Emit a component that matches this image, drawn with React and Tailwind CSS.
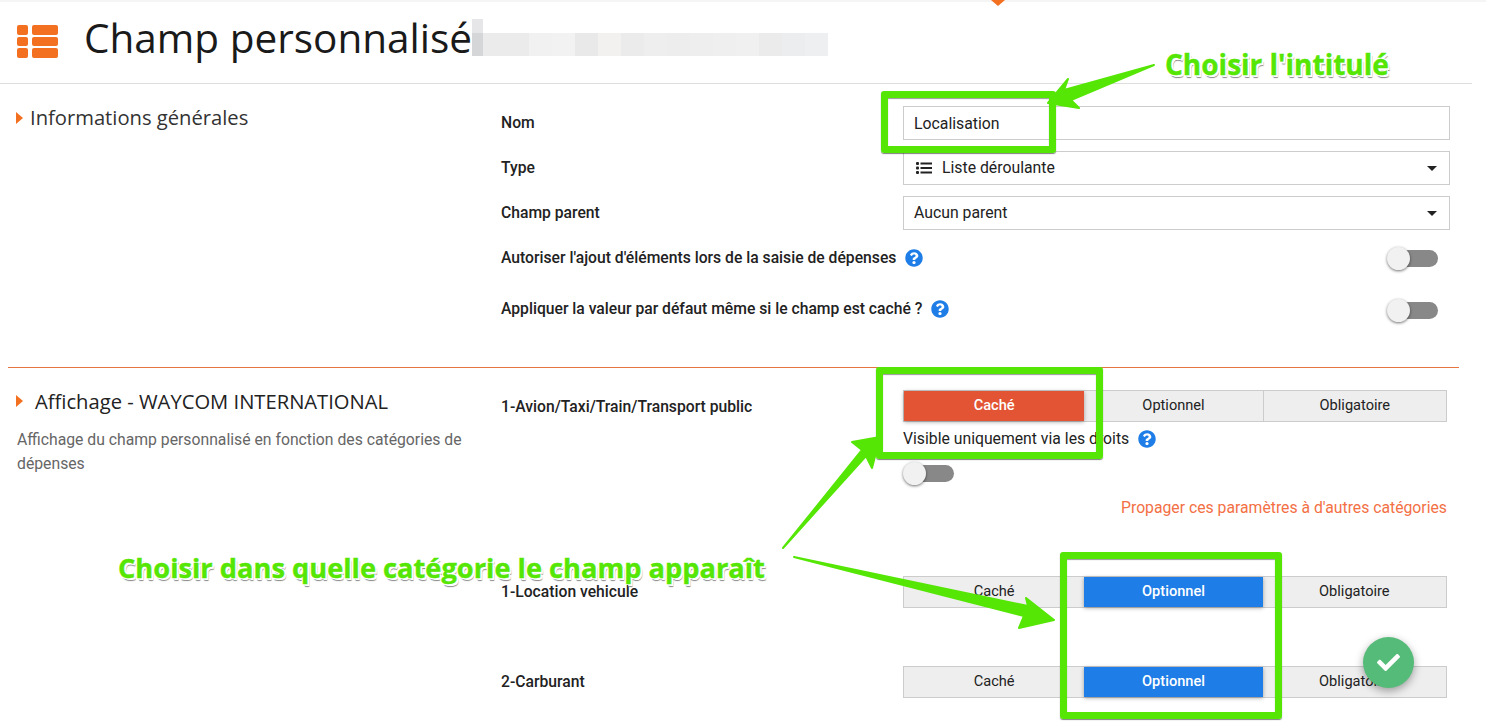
import { FaCheck, FaQuestionCircle } from "react-icons/fa";

const greens = "text-[#55e605]";
const annotationShadow =
  "[text-shadow:1px_0_0_#fff,-1px_0_0_#fff,0_1px_0_#fff,0_-1px_0_#fff,1px_1px_0_#fff,-1px_-1px_0_#fff,1px_-1px_0_#fff,-1px_1px_0_#fff,2px_2px_0_#fff,2px_3px_1px_#888]";

// Blurred-out part of the title
const blurCells = [
  "bg-[#ebebeb]",
  "bg-[#ebebeb]",
  "bg-[#f1f1f1]",
  "bg-[#f2f2f2]",
  "bg-[#e9e9e9]",
  "bg-[#f2f1ef]",
  "bg-[#ebebeb]",
  "bg-[#eeeeee]",
  "bg-[#ededed]",
  "bg-[#eeeeee]",
  "bg-[#efefef]",
  "bg-[#f0f0f0]",
  "bg-[#ebebeb]",
  "bg-[#ecedee]",
  "bg-[#eeeff0]",
];

function TableIcon() {
  return (
    <svg width="41" height="33" viewBox="0 0 41 33" className="shrink-0">
      <g fill="#f37021">
        <rect x="0" y="0" width="11" height="10" rx="2" />
        <rect x="15" y="0" width="26" height="10" rx="2" />
        <rect x="0" y="12" width="11" height="9" rx="2" />
        <rect x="15" y="12" width="26" height="9" rx="2" />
        <rect x="0" y="23" width="11" height="10" rx="2" />
        <rect x="15" y="23" width="26" height="10" rx="2" />
      </g>
    </svg>
  );
}

function Caret() {
  return <span className="block shrink-0 w-0 h-0 border-y-[6px] border-y-transparent border-l-[7px] border-l-[#f37021]" />;
}

function SelectCaret() {
  return <span className="block ml-auto w-0 h-0 border-x-[5px] border-x-transparent border-t-[5px] border-t-[#222]" />;
}

function Help() {
  return <FaQuestionCircle size={18} color="#1e7de6" className="shrink-0" />;
}

function Toggle({ className = "" }) {
  return (
    <div className={`relative w-[51px] h-[18px] ${className}`}>
      <div className="absolute right-0 top-0 w-[40px] h-[17px] rounded-full bg-[#888]" />
      <div className="absolute left-0 top-[-3px] w-[23px] h-[23px] rounded-full bg-[#f1f1f1] shadow-[0_1px_3px_rgba(0,0,0,0.55)]" />
    </div>
  );
}

function Row({ label, children }) {
  return (
    <div className="flex items-center h-[34px] mb-[11px]">
      <div className="w-[402px] text-[15.7px] font-medium text-[#222]">{label}</div>
      {children}
    </div>
  );
}

function Segments({ active }) {
  const cells = [
    { name: "Caché", w: "w-[181px]", on: "bg-[#e25433] text-white" },
    { name: "Optionnel", w: "w-[179px]", on: "bg-[#1e7de6] text-white" },
    { name: "Obligatoire", w: "w-[184px]", on: "bg-[#1e7de6] text-white" },
  ];
  return (
    <div className="flex w-[544px] h-[32px] bg-[#eeeeee] border border-[#cccccc] text-[14.6px] text-[#222]">
      {cells.map((c, i) => (
        <div
          key={c.name}
          className={`flex items-center justify-center ${c.w} ${
            active === c.name
              ? `${c.on} font-medium shadow-[0_1px_4px_rgba(0,0,0,0.35)]`
              : i === 2 && active === "Caché"
              ? "border-l border-[#cccccc]"
              : ""
          }`}
        >
          {c.name}
        </div>
      ))}
    </div>
  );
}

function GreenBox({ className }) {
  return (
    <div
      className={`absolute border-[7px] border-[#55e605] rounded-[3px] shadow-[0_1px_1px_rgba(0,0,0,0.5),inset_0_1px_1px_rgba(0,0,0,0.4)] ${className}`}
    />
  );
}

export default function App() {
  return (
    <div className="relative w-full h-[723px] overflow-hidden bg-white font-['Roboto',sans-serif] text-[#222]">
      {/* top bar shadow and notch */}
      <div className="absolute top-0 left-0 w-full h-[2px] bg-[#f5f5f5]" />
      <div className="absolute top-0 left-[991px] w-0 h-0 border-x-[7px] border-x-transparent border-t-[6px] border-t-[#f37021]" />

      {/* Header */}
      <div className="flex items-center w-[1472px] h-[84px] pl-[17px] border-b border-[#dddddd]">
        <TableIcon />
        <h1 className="ml-[26px] mt-[-7px] text-[40.5px] leading-none text-[#1a1a1a] font-['Open_Sans',sans-serif]">
          Champ personnalisé
        </h1>
        <div className="flex items-end h-[37px] mt-[-9px]">
          <div className="w-[11px] h-[37px] flex flex-col">
            <div className="h-[14px] bg-[#e6e6e8]" />
            <div className="h-[23px] bg-[#d5d6d8]" />
          </div>
          {blurCells.map((c, i) => (
            <div key={i} className={`w-[23px] h-[23px] ${c}`} />
          ))}
        </div>
      </div>

      {/* Informations generales */}
      <div className="flex h-[283px] pt-[21px]">
        <div className="w-[501px] pl-[16px] flex items-start gap-[7px]">
          <span className="mt-[7px]">
            <Caret />
          </span>
          <h2 className="text-[20.2px] leading-[24px] text-[#333] font-['Open_Sans',sans-serif]">Informations générales</h2>
        </div>
        <div className="w-[949px] pt-px">
          <Row label="Nom">
            <div className="flex items-center w-[547px] h-[34px] px-[10px] pt-[2px] border border-[#cccccc] text-[15.8px]">Localisation</div>
          </Row>
          <Row label="Type">
            <div className="flex items-center w-[547px] h-[34px] pl-[12px] pr-[12px] border border-[#cccccc] text-[15.8px]">
              <svg width="16" height="12" viewBox="0 0 16 12" className="mr-[10px]" fill="#222">
                <rect x="0" y="0" width="3" height="3" rx="1" />
                <rect x="0" y="4.5" width="3" height="3" rx="1" />
                <rect x="0" y="9" width="3" height="3" rx="1" />
                <rect x="4.5" y="0.5" width="11.5" height="2" />
                <rect x="4.5" y="5" width="11.5" height="2" />
                <rect x="4.5" y="9.5" width="11.5" height="2" />
              </svg>
              Liste déroulante
              <SelectCaret />
            </div>
          </Row>
          <Row label="Champ parent">
            <div className="flex items-center w-[547px] h-[34px] pl-[10px] pr-[12px] border border-[#cccccc] text-[15.8px]">
              Aucun parent
              <SelectCaret />
            </div>
          </Row>
          <div className="flex items-center justify-between w-[949px] h-[34px] mb-[17px] pr-[12px]">
            <div className="flex items-center gap-[9px] text-[15.7px] font-medium">
              Autoriser l'ajout d'éléments lors de la saisie de dépenses <Help />
            </div>
            <Toggle className="mt-[2px]" />
          </div>
          <div className="flex items-center justify-between w-[949px] h-[34px] pr-[12px]">
            <div className="flex items-center gap-[9px] text-[15.7px] font-medium">
              Appliquer la valeur par défaut même si le champ est caché ? <Help />
            </div>
            <Toggle className="mt-[4px]" />
          </div>
        </div>
      </div>

      <div className="ml-[8px] w-[1451px] h-px bg-[#e8743f]" />

      {/* Affichage */}
      <div className="flex pt-[22px]">
        <div className="w-[501px] pl-[16px]">
          <div className="flex items-center gap-[12px] mt-[-1px]">
            <Caret />
            <h2 className="text-[20.2px] leading-[24px] text-[#222] font-['Open_Sans',sans-serif]">
              Affichage - WAYCOM INTERNATIONAL
            </h2>
          </div>
          <p className="mt-[15px] ml-px w-[460px] text-[15.75px] leading-[24px] text-[#666]">
            Affichage du champ personnalisé en fonction des catégories de dépenses
          </p>
        </div>
        <div className="w-[946px]">
          <div className="flex items-start">
            <div className="w-[402px] h-[32px] pt-[2px] flex items-center text-[15.7px] font-medium">1-Avion/Taxi/Train/Transport public</div>
            <div>
              <Segments active="Caché" />
              <div className="flex items-center gap-[9px] mt-[6px] text-[15.75px] leading-[22px]">
                Visible uniquement via les droits <Help />
              </div>
              <Toggle className="mt-[15px]" />
              <div className="mt-[14px] text-right text-[15.75px] leading-[22px] text-[#f37045]">Propager ces paramètres à d'autres catégories</div>
            </div>
          </div>
          <div className="flex items-center mt-[57px]">
            <div className="w-[402px] text-[15.7px] font-medium">1-Location vehicule</div>
            <Segments active="Optionnel" />
          </div>
          <div className="flex items-center mt-[58px]">
            <div className="w-[402px] text-[15.7px] font-medium">2-Carburant</div>
            <Segments active="Optionnel" />
          </div>
        </div>
      </div>

      {/* Save button */}
      <div className="absolute left-[1363px] top-[637px] flex items-center justify-center w-[51px] h-[51px] rounded-full bg-[#55bb78] shadow-[0_3px_8px_rgba(0,0,0,0.35)]">
        <FaCheck size={23} color="#fff" />
      </div>

      {/* Annotations */}
      <GreenBox className="left-[881px] top-[91px] w-[175px] h-[62px]" />
      <GreenBox className="left-[876px] top-[367px] w-[227px] h-[92px]" />
      <GreenBox className="left-[1060px] top-[552px] w-[222px] h-[167px]" />
      <svg width="1486" height="723" className="absolute inset-0 pointer-events-none">
        <g fill="#55e605" stroke="#55e605" strokeWidth="2" strokeLinejoin="round">
          <polygon points="1154,65 1064,90 1068,79 1048,103 1079,108 1071,100" />
          <polygon points="783,548 862,450 852,442 880,437 872,468 866,456" />
          <polygon points="794,557 1028,606 1026,598 1054,620 1019,628 1024,616" />
        </g>
      </svg>
      <div className={`absolute left-[1165px] top-[45px] text-[28px] leading-[38px] font-bold [-webkit-text-stroke:0.4px_#55e605] font-['Open_Sans',sans-serif] ${greens} ${annotationShadow}`}>
        Choisir l'intitulé
      </div>
      <div className={`absolute left-[118px] top-[549px] text-[27.25px] leading-[38px] font-bold whitespace-nowrap [-webkit-text-stroke:0.4px_#55e605] font-['Open_Sans',sans-serif] ${greens} ${annotationShadow}`}>
        Choisir dans quelle catégorie le champ apparaît
      </div>
    </div>
  );
}
